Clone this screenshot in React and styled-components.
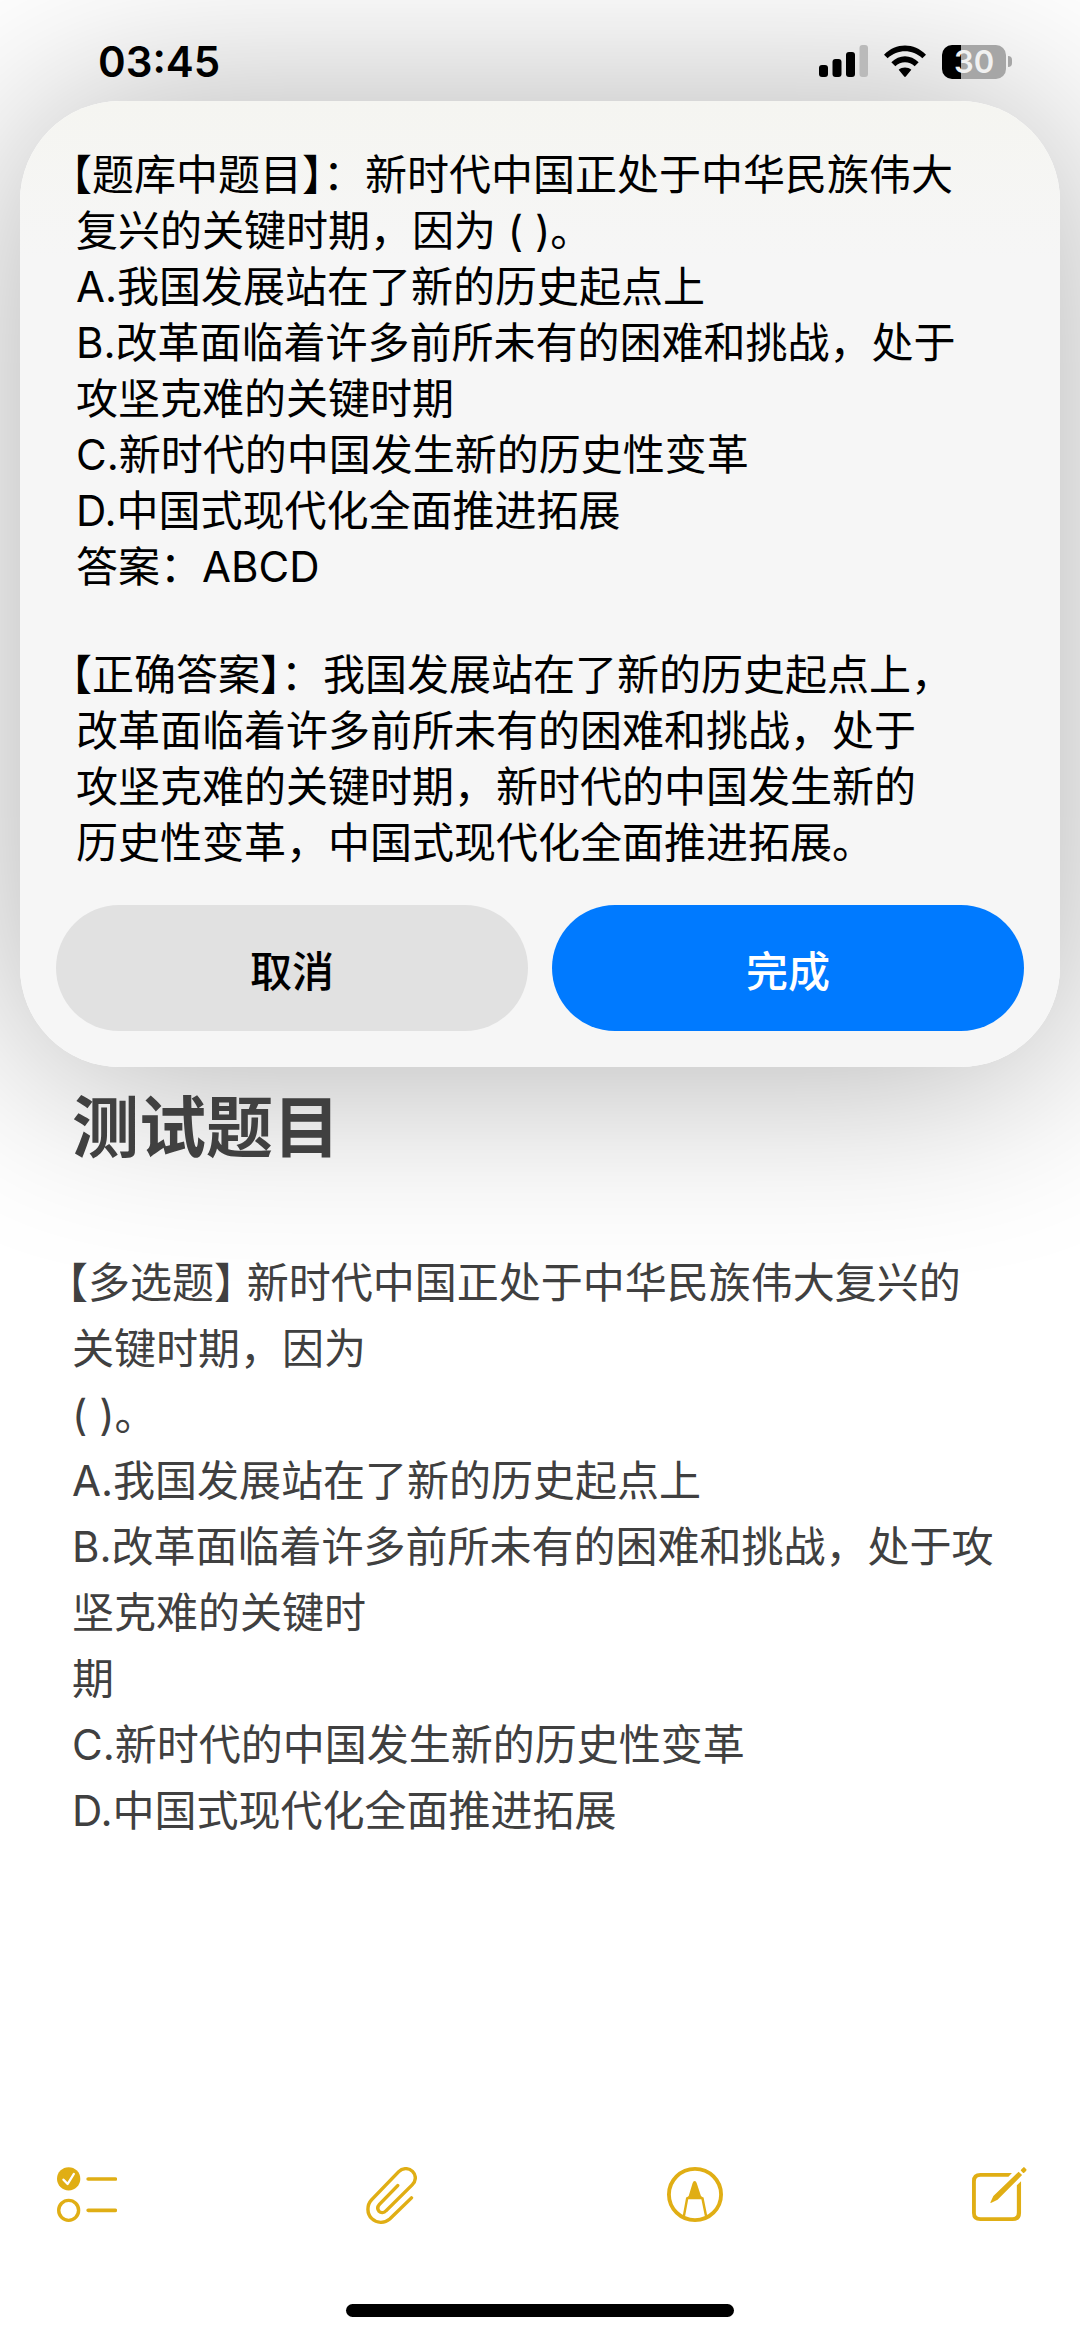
import React from 'react';
import styled, { createGlobalStyle } from 'styled-components';

const GlobalStyle = createGlobalStyle`
  *, *::before, *::after { box-sizing: border-box; }
  body {
    margin: 0;
    background: #fff;
    color: #000;
    font-family: Inter, "Noto Sans CJK SC", sans-serif;
  }
  h1, p { margin: 0; }
`;

const Screen = styled.div`
  display: flex;
  flex-direction: column;
  min-height: 100vh;
  overflow: hidden;
`;

const StatusBar = styled.header`
  display: flex;
  align-items: center;
  justify-content: space-between;
  height: 101px;
  padding: 22px 68px 0 98px;
  position: relative;
  z-index: 2;
`;

const Clock = styled.time`
  font-size: 42px;
  line-height: 48px;
  font-weight: 600;
`;

const StatusIcons = styled.div`
  display: flex;
  align-items: center;
  gap: 16px;
`;

const BatteryWrap = styled.div`
  display: flex;
  align-items: center;
  gap: 2px;
`;

const BatteryBody = styled.span`
  display: flex;
  align-items: center;
  justify-content: center;
  width: 64px;
  height: 34px;
  border-radius: 10px;
  background: linear-gradient(to right, #000 30%, #a6a6a6 30%);
  color: #f1f1f1;
  font-size: 31px;
  line-height: 34px;
  font-weight: 600;
`;

const BatteryNub = styled.span`
  width: 4px;
  height: 11px;
  border-radius: 0 6px 6px 0;
  background: #a6a6a6;
`;

const Alert = styled.section`
  margin: 0 20px;
  padding: 46px 36px 36px;
  border-radius: 100px;
  background: linear-gradient(#f5f5f1, #f6f6f6 160px);
  box-shadow: 0 6px 200px rgba(0, 0, 0, 0.32);
  position: relative;
  z-index: 1;
`;

const AlertText = styled.div`
  display: flex;
  flex-direction: column;
  gap: 52px;
  padding: 0 20px;
  font-size: 42px;
  line-height: 56px;
`;

const Line = styled.p`
  text-spacing-trim: trim-start;
  text-indent: ${(p) => (p.$hanging ? '-5px' : '0')};
`;

const Label = styled.span`
  font-feature-settings: "halt";
`;

const AlertActions = styled.div`
  display: grid;
  grid-template-columns: 1fr 1fr;
  gap: 24px;
  margin-top: 34px;
`;

const ActionButton = styled.button`
  height: 126px;
  border: 0;
  border-radius: 63px;
  background: ${(p) => (p.$primary ? '#007aff' : '#e1e1e1')};
  color: ${(p) => (p.$primary ? '#fff' : '#000')};
  font-family: inherit;
  font-size: 42px;
  font-weight: 500;
`;

const Note = styled.main`
  padding: 21px 72px 0;
  color: #404040;
  position: relative;
  z-index: 2;
`;

const NoteTitle = styled.h1`
  font-size: 67px;
  line-height: 80px;
  font-weight: 700;
`;

const NoteBody = styled.div`
  margin-top: 82px;
  font-size: 42px;
  line-height: 66px;
`;

const Toolbar = styled.nav`
  display: flex;
  align-items: flex-start;
  justify-content: space-between;
  height: 60px;
  margin-top: auto;
  padding: 0 53px 0 57px;
`;

const ToolButton = styled.button`
  display: flex;
  padding: 0;
  border: 0;
  background: none;
  color: #e0ae14;
`;

const HomeIndicator = styled.div`
  width: 36%;
  height: 13px;
  margin: 77px auto 20px;
  border-radius: 7px;
  background: #000;
`;

const SignalIcon = () => (
  <svg width="49" height="33" viewBox="0 0 49 33" aria-hidden="true">
    <rect x="0" y="20" width="9" height="12" rx="3" />
    <rect x="13.5" y="14" width="9" height="18" rx="3" />
    <rect x="27" y="7" width="9" height="25" rx="3" />
    <rect x="40.5" y="0" width="8.5" height="32" rx="3" fill="#bababa" />
  </svg>
);

const WifiIcon = () => (
  <svg width="42" height="33" viewBox="371 135 126 97" aria-hidden="true">
    <path d="M371 163C407 126 461 126 497 163L486 174C456 146 412 146 382 174Z" />
    <path d="M393 186C417 162 451 162 475 186L463 198C447 182 421 182 405 198Z" />
    <path d="M415 208C425 199 443 199 453 208L437 228Q434 232 431 228Z" />
  </svg>
);

const ChecklistIcon = () => (
  <svg width="60" height="55" viewBox="165 113 175 165" preserveAspectRatio="none" fill="none" stroke="currentColor" aria-hidden="true">
    <ellipse cx="199" cy="148.500" rx="34" ry="35" fill="currentColor" stroke="none" />
    <path d="M184 151L196 164L214 134" stroke="#fff" strokeWidth="7" strokeLinecap="round" strokeLinejoin="round" />
    <ellipse cx="199" cy="243" rx="29" ry="30" strokeWidth="10" />
    <path d="M256 149H335M256 243H335" strokeWidth="11" strokeLinecap="round" />
  </svg>
);

const PaperclipIcon = () => (
  <svg width="51" height="57" viewBox="1065 113 148 172" preserveAspectRatio="none" fill="none" stroke="currentColor" strokeWidth="10" strokeLinecap="round" aria-hidden="true">
    <path d="M1197 206L1134 270C1118 284 1096 283 1082 269C1067 254 1067 228 1081 212L1160 127C1171 115 1189 115 1200 126C1211 137 1211 155 1199 167L1123 245C1117 252 1108 252 1103 247C1098 241 1098 233 1104 226L1157 169" />
  </svg>
);

const MarkerIcon = () => (
  <svg width="56" height="55" viewBox="366 113 160 165" preserveAspectRatio="none" fill="none" stroke="currentColor" aria-hidden="true">
    <ellipse cx="446" cy="195.500" rx="74.500" ry="77" strokeWidth="11" />
    <path d="M445 155Q449 155 451 162L463 200L470 205L468 210H424L421 205L428 200L439 162Q441 155 445 155Z" fill="currentColor" stroke="none" />
    <path d="M424 205L414 262M467 205L478 262" strokeWidth="7" />
  </svg>
);

const ComposeIcon = () => (
  <svg width="55" height="54" viewBox="1254 110 157 160" preserveAspectRatio="none" aria-hidden="true">
    <path d="M1368 128H1278Q1254 128 1254 152V246Q1254 270 1278 270H1370Q1394 270 1394 246V152L1382 164V245Q1382 259 1369 259H1279Q1265 259 1265 246V152Q1265 139 1279 139H1358Z" fill="currentColor" />
    <path d="M1387 124L1397 134L1327 207L1308 217Q1306 217 1307 214L1315 196ZM1402 110Q1404 110 1410 118Q1410 120 1402 128Q1400 128 1393 120Q1393 118 1402 110Z" fill="currentColor" />
  </svg>
);

const tools = [
  { label: '核对清单', Icon: ChecklistIcon },
  { label: '附件', Icon: PaperclipIcon },
  { label: '标记', Icon: MarkerIcon },
  { label: '新建备忘录', Icon: ComposeIcon },
];

const bankLines = [
  '【题库中题目】：新时代中国正处于中华民族伟大',
  '复兴的关键时期，因为 ( )。',
  'A.我国发展站在了新的历史起点上',
  'B.改革面临着许多前所未有的困难和挑战，处于',
  '攻坚克难的关键时期',
  'C.新时代的中国发生新的历史性变革',
  'D.中国式现代化全面推进拓展',
  '答案：ABCD',
];

const answerLines = [
  '【正确答案】：我国发展站在了新的历史起点上，',
  '改革面临着许多前所未有的困难和挑战，处于',
  '攻坚克难的关键时期，新时代的中国发生新的',
  '历史性变革，中国式现代化全面推进拓展。',
];

const noteLines = [
  '关键时期，因为',
  '( )。',
  'A.我国发展站在了新的历史起点上',
  'B.改革面临着许多前所未有的困难和挑战，处于攻',
  '坚克难的关键时',
  '期',
  'C.新时代的中国发生新的历史性变革',
  'D.中国式现代化全面推进拓展',
];

const Lines = ({ items }) =>
  items.map((text) => (
    <Line key={text} $hanging={text.startsWith('【')}>
      {text}
    </Line>
  ));

export default function App() {
  return (
    <Screen lang="zh-CN">
      <GlobalStyle />
      <StatusBar>
        <Clock dateTime="03:45">03:45</Clock>
        <StatusIcons>
          <SignalIcon />
          <WifiIcon />
          <BatteryWrap>
            <BatteryBody>30</BatteryBody>
            <BatteryNub />
          </BatteryWrap>
        </StatusIcons>
      </StatusBar>

      <Alert role="dialog" aria-label="答案">
        <AlertText>
          <div>
            <Lines items={bankLines} />
          </div>
          <div>
            <Lines items={answerLines} />
          </div>
        </AlertText>
        <AlertActions>
          <ActionButton type="button">取消</ActionButton>
          <ActionButton type="button" $primary>完成</ActionButton>
        </AlertActions>
      </Alert>

      <Note>
        <NoteTitle>测试题目</NoteTitle>
        <NoteBody>
          <Line $hanging>
            <Label>【多选题】</Label> 新时代中国正处于中华民族伟大复兴的
          </Line>
          <Lines items={noteLines} />
        </NoteBody>
      </Note>

      <Toolbar aria-label="工具栏">
        {tools.map(({ label, Icon }) => (
          <ToolButton key={label} type="button" aria-label={label}>
            <Icon />
          </ToolButton>
        ))}
      </Toolbar>
      <HomeIndicator />
    </Screen>
  );
}
